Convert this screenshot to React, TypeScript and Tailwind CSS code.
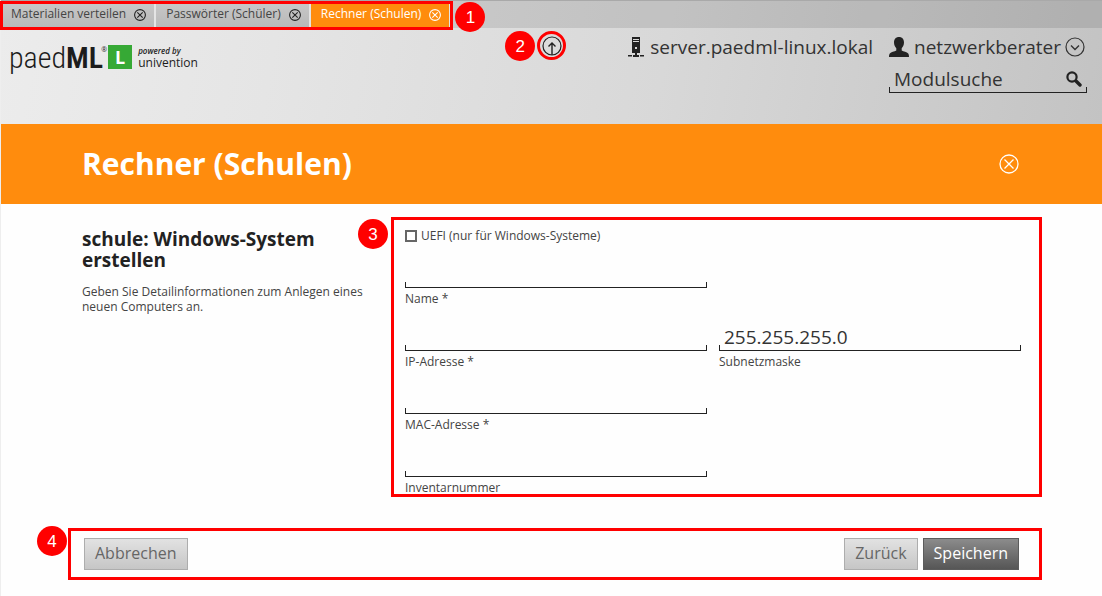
import type { ReactNode } from "react";

const tabs = [
  { title: "Materialien verteilen", active: false },
  { title: "Passwörter (Schüler)", active: false },
  { title: "Rechner (Schulen)", active: true },
];

const lineField =
  "bg-no-repeat bg-[linear-gradient(#222,#222),linear-gradient(#222,#222),linear-gradient(#222,#222)] [background-size:1px_6px,1px_6px,100%_1px] [background-position:left_bottom,right_bottom,left_bottom]";

function CloseIcon({ className }: { className: string }) {
  return (
    <svg viewBox="0 0 20 20" fill="none" stroke="currentColor" className={className} aria-hidden="true">
      <circle cx="10" cy="10" r="9" />
      <path d="M5.500 5.500l9 9M14.500 5.500l-9 9" />
    </svg>
  );
}

function Marker({ children, className }: { children: ReactNode; className: string }) {
  return (
    <span
      className={`absolute flex size-[30px] items-center justify-center rounded-full bg-[#f00] font-['Liberation_Sans',sans-serif] text-[17px] leading-none text-white ${className}`}
    >
      {children}
    </span>
  );
}

function Frame({ className }: { className: string }) {
  return <span className={`pointer-events-none absolute border-3 border-[#f00] ${className}`} />;
}

function Field({ id, label, value }: { id: string; label: string; value?: string }) {
  return (
    <div className="flex flex-col gap-[3px]">
      <input
        id={id}
        type="text"
        defaultValue={value}
        className={`h-8 w-full px-[5px] pt-1 text-[19px] leading-6 text-[#333] outline-none ${lineField}`}
      />
      <label htmlFor={id} className="text-xs leading-4">
        {label}
      </label>
    </div>
  );
}

function TabBar() {
  return (
    <div className="flex h-7 border-t border-[#a9a9a9] bg-black/10">
      <nav className="relative flex">
        {tabs.map((tab) => (
          <div
            key={tab.title}
            className={`flex items-center gap-2 border-r-2 border-[#e4e4e4] pr-2 pl-2.5 text-xs ${
              tab.active ? "bg-[#ff8c0d] text-white" : "bg-linear-to-b from-[#c9c9c9] to-[#b8b8b8] text-[#444]"
            }`}
          >
            <a href="#" className="pb-0.5 leading-4">
              {tab.title}
            </a>
            <button type="button" aria-label={`${tab.title} schließen`} className={tab.active ? "text-white" : "text-[#222]"}>
              <CloseIcon className="size-3 [stroke-width:1.8]" />
            </button>
          </div>
        ))}
        <Frame className="-right-0.5 -bottom-0.5 top-0 -left-px" />
        <Marker className="top-[1px] left-full ml-1">1</Marker>
      </nav>
    </div>
  );
}

function Logo() {
  return (
    <div className="flex items-start pt-4 text-[#1c1c1c]">
      <div className="flex items-start font-['Roboto_Condensed','Roboto',sans-serif] text-[30px] leading-7">
        <span className="font-light">paed</span>
        <strong className="font-semibold">ML</strong>
      </div>
      <span className="-ml-0.5 w-[7px] pt-0.5 text-[7px] leading-2">®</span>
      <span className="mt-px flex h-6 w-6 items-center justify-center bg-[#36a935] text-lg font-bold text-white">L</span>
      <div className="ml-1.5 flex flex-col pt-[3px]">
        <span className="text-[8px] leading-2 font-semibold italic">powered by</span>
        <span className="text-xs leading-4">univention</span>
      </div>
    </div>
  );
}

function Header() {
  return (
    <header className="h-[124px] bg-[linear-gradient(100deg,#ececec_0%,#e5e5e5_25%,#d8d8d8_60%,#c3c3c3_100%)]">
      <TabBar />
      <div className="flex justify-between pr-[15px] pl-2">
        <Logo />
        <div className="flex items-start">
          <div className="relative mt-[3px] mr-[62px]">
            <button
              type="button"
              aria-label="Benachrichtigungen"
              className="flex size-[29px] items-center justify-center rounded-full border-3 border-[#f00] text-[#222]"
            >
              <svg viewBox="0 0 20 20" fill="none" stroke="currentColor" className="size-5" aria-hidden="true">
                <circle cx="10" cy="10" r="9" strokeWidth="1.2" />
                <path d="M10 19V7M6.500 10.500L10 7l3.500 3.500" strokeWidth="1.4" />
              </svg>
            </button>
            <Marker className="top-0 right-full mr-0.5">2</Marker>
          </div>
          <div className="flex flex-col items-end text-[19px] leading-6 text-[#333]">
            <div className="mr-0.5 flex items-center pt-[7px]">
              <svg viewBox="0 0 16 20" className="mr-1.5 h-5 w-4 text-[#222]" fill="currentColor" aria-hidden="true">
                <path fillRule="evenodd" d="M4 0h8v16H4zM5 2v1h6V2zM5 4v1h6V4zM7 10v2h2v-2z" />
                <path d="M7 16h2v2h2v2H5v-2h2zM0 18h4v1.500H0zM12 18h4v1.500h-4z" />
              </svg>
              <span>server.paedml-linux.lokal</span>
              <svg viewBox="0 0 20 20" className="mr-[5px] ml-4 size-5 text-[#222]" fill="currentColor" aria-hidden="true">
                <path d="M10 0c3.200 0 5 2.200 5 5.300 0 2.700-1 4.600-2.300 6v2.200c1.700 1 5.300 1.600 6.500 3 .6.800.8 2.200.8 3.500H0c0-1.300.2-2.700.8-3.500 1.200-1.400 4.800-2 6.500-3v-2.200C6 9.900 5 8 5 5.300 5 2.200 6.800 0 10 0z" />
              </svg>
              <button type="button" className="flex items-center gap-1">
                netzwerkberater
                <svg viewBox="0 0 20 20" fill="none" stroke="currentColor" className="size-5" aria-hidden="true">
                  <circle cx="10" cy="10" r="9" strokeWidth="1.2" />
                  <path d="M6 8.500l4 4 4-4" strokeWidth="1.4" />
                </svg>
              </button>
            </div>
            <div className={`mt-1.5 flex h-7 w-[198px] items-start pt-0.5 ${lineField}`}>
              <input
                type="search"
                aria-label="Modulsuche"
                placeholder="Modulsuche"
                className="min-w-0 flex-1 pl-[5px] outline-none placeholder:text-[#333]"
              />
              <button type="button" aria-label="Suchen" className="mt-1 mr-[5px]">
                <svg viewBox="0 0 16 16" fill="none" stroke="#222" className="size-4" aria-hidden="true">
                  <circle cx="6" cy="6" r="4.600" strokeWidth="2.200" />
                  <path d="M10 10l4 4" strokeWidth="3.400" strokeLinecap="round" />
                </svg>
              </button>
            </div>
          </div>
        </div>
      </div>
    </header>
  );
}

export default function App() {
  return (
    <div className="min-h-screen border-l border-[#eee] bg-[#fefefe] font-['Open_Sans',sans-serif] text-[#444]">
      <Header />
      <div className="flex h-20 items-center justify-between bg-[#ff8c0d] pr-[83px] pl-[81px] text-white">
        <h1 className="text-[30px] leading-10 font-bold">Rechner (Schulen)</h1>
        <button type="button" aria-label="Modul schließen">
          <CloseIcon className="size-5 [stroke-width:1.3]" />
        </button>
      </div>
      <main className="pt-[13px] pr-[60px]">
        <div className="flex pl-[81px]">
          <section className="w-[309px] shrink-0 pt-3 pr-5">
            <h2 className="text-[19px] leading-[21px] font-bold text-[#222]">schule: Windows-System erstellen</h2>
            <p className="mt-[13px] text-xs leading-[15px]">Geben Sie Detailinformationen zum Anlegen eines neuen Computers an.</p>
          </section>
          <form className="relative flex-1 pt-[11px] pr-[21px] pb-px pl-3.5">
            <Frame className="inset-0" />
            <Marker className="top-0.5 right-full mr-[3px]">3</Marker>
            <label className="flex items-center gap-1 text-xs leading-4">
              <input type="checkbox" className="size-3 appearance-none border-2 border-[#666] bg-white checked:bg-[#666]" />
              UEFI (nur für Windows-Systeme)
            </label>
            <div className="mt-3 grid grid-cols-2 gap-3">
              <Field id="name" label="Name *" />
              <div />
              <Field id="ip" label="IP-Adresse *" />
              <Field id="subnet" label="Subnetzmaske" value="255.255.255.0" />
              <Field id="mac" label="MAC-Adresse *" />
              <div />
              <Field id="inventory" label="Inventarnummer" />
            </div>
          </form>
        </div>
        <footer className="relative mt-[31px] ml-[67px] flex justify-between py-2.5 pr-[23px] pl-4 text-base leading-7">
          <Frame className="inset-0" />
          <Marker className="-top-0.5 right-full mr-px">4</Marker>
          <button type="button" className="border border-[#adadad] bg-linear-to-b from-[#e2e2e2] to-[#c6c6c6] px-2.5 pb-0.5 text-[#666]">
            Abbrechen
          </button>
          <div className="flex gap-[5px]">
            <button type="button" className="border border-[#adadad] bg-linear-to-b from-[#e2e2e2] to-[#c6c6c6] px-2.5 pb-0.5 text-[#666]">
              Zurück
            </button>
            <button type="button" className="border border-[#5c5c5c] bg-linear-to-b from-[#8c8c8c] to-[#565656] px-2.5 pb-0.5 text-white">
              Speichern
            </button>
          </div>
        </footer>
      </main>
    </div>
  );
}
